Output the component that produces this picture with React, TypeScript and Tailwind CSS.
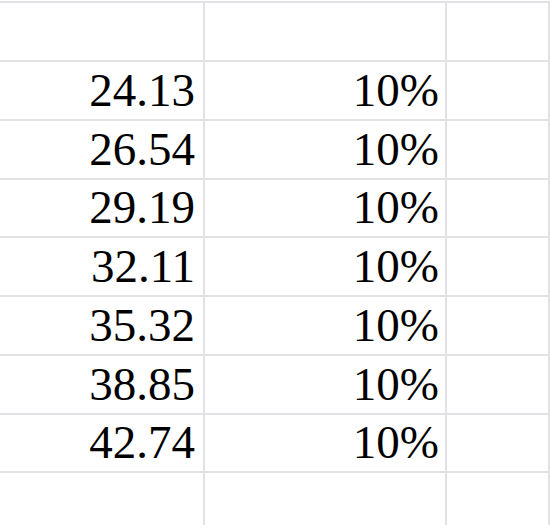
import React from "react";

const values = ["24.13", "26.54", "29.19", "32.11", "35.32", "38.85", "42.74"];

function Row({ a, b, first }: { a?: string; b?: string; first?: boolean }) {
  return (
    <div
      className={
        "flex border-b-2 border-[#e1e1e6] " + (first ? "h-[59px]" : "h-[58.75px]")
      }
    >
      <div className="w-[205px] shrink-0 border-r-2 border-[#e1e1e6] flex items-center justify-end pr-[8px] leading-none">
        {a}
      </div>
      <div className="w-[242px] shrink-0 border-r-2 border-[#e1e1e6] flex items-center justify-end pr-[6px] leading-none">
        {b}
      </div>
      <div className="w-[103px] shrink-0 border-r-2 border-[#e1e1e6]" />
    </div>
  );
}

export default function App() {
  return (
    <div className="w-[550px] h-[525px] overflow-hidden bg-white pt-px text-[47px] text-black font-['Liberation_Serif','Tinos','DejaVu_Serif',serif]">
      <div className="border-t-2 border-[#e1e1e6]">
        <Row first />
        {values.map((v) => (
          <Row key={v} a={v} b="10%" />
        ))}
        <Row />
      </div>
    </div>
  );
}
